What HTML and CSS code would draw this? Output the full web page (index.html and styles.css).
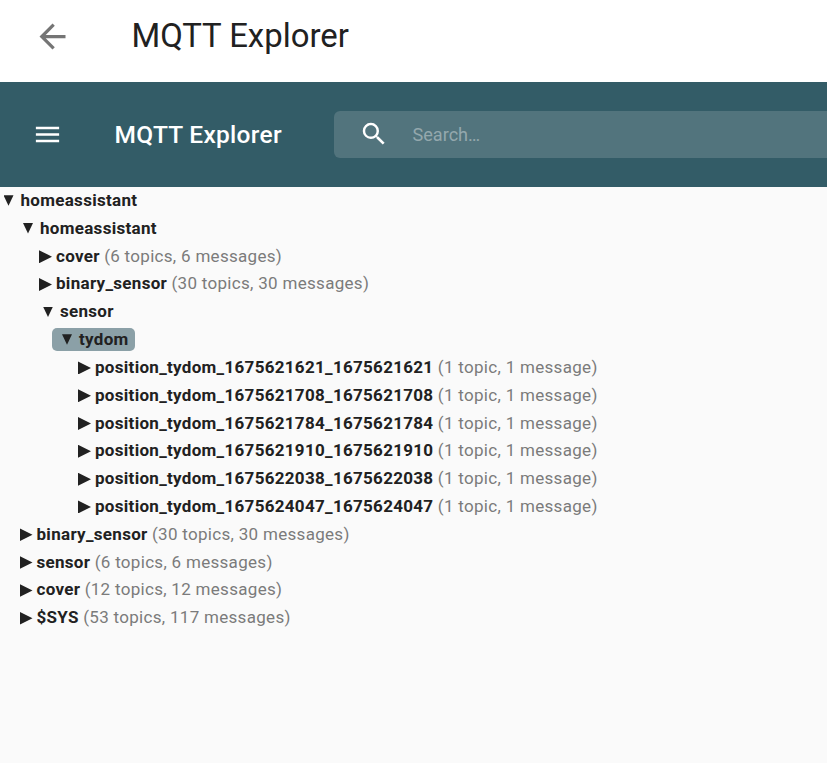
FILE: index.html
```html
<!DOCTYPE html>
<html lang="en">
<head>
<meta charset="utf-8">
<title>MQTT Explorer</title>
<link rel="stylesheet" href="styles.css">
</head>
<body>
<header class="page-header">
  <svg class="back" viewBox="0 0 24 24"><path d="M20 11H7.83l5.59-5.59L12 4l-8 8 8 8 1.41-1.41L7.83 13H20v-2z"/></svg>
  <h1>MQTT Explorer</h1>
</header>
<nav class="app-bar">
  <svg class="menu" viewBox="0 0 24 24"><path d="M3 18h18v-2H3v2zm0-5h18v-2H3v2zm0-7v2h18V6H3z"/></svg>
  <h2>MQTT Explorer</h2>
  <div class="search">
    <svg viewBox="0 0 24 24"><path d="M15.5 14h-.79l-.28-.27A6.47 6.47 0 0 0 16 9.5 6.5 6.5 0 1 0 9.5 16c1.61 0 3.09-.59 4.23-1.57l.27.28v.79l5 4.99L20.49 19l-4.99-5zm-6 0C7.01 14 5 11.99 5 9.5S7.01 5 9.5 5 14 7.01 14 9.5 11.99 14 9.5 14z"/></svg>
    <span>Search…</span>
  </div>
</nav>
<main class="tree">
  <div class="row open l0"><i></i><b>homeassistant</b></div>
  <div class="row open l1"><i></i><b>homeassistant</b></div>
  <div class="row l2"><i></i><b>cover</b><span>(6 topics, 6 messages)</span></div>
  <div class="row l2"><i></i><b>binary_sensor</b><span>(30 topics, 30 messages)</span></div>
  <div class="row open l2"><i></i><b>sensor</b></div>
  <div class="row open l3"><div class="selected"><i></i><b>tydom</b></div></div>
  <div class="row l4"><i></i><b>position_tydom_1675621621_1675621621</b><span>(1 topic, 1 message)</span></div>
  <div class="row l4"><i></i><b>position_tydom_1675621708_1675621708</b><span>(1 topic, 1 message)</span></div>
  <div class="row l4"><i></i><b>position_tydom_1675621784_1675621784</b><span>(1 topic, 1 message)</span></div>
  <div class="row l4"><i></i><b>position_tydom_1675621910_1675621910</b><span>(1 topic, 1 message)</span></div>
  <div class="row l4"><i></i><b>position_tydom_1675622038_1675622038</b><span>(1 topic, 1 message)</span></div>
  <div class="row l4"><i></i><b>position_tydom_1675624047_1675624047</b><span>(1 topic, 1 message)</span></div>
  <div class="row l1"><i></i><b>binary_sensor</b><span>(30 topics, 30 messages)</span></div>
  <div class="row l1"><i></i><b>sensor</b><span>(6 topics, 6 messages)</span></div>
  <div class="row l1"><i></i><b>cover</b><span>(12 topics, 12 messages)</span></div>
  <div class="row l1"><i></i><b>$SYS</b><span>(53 topics, 117 messages)</span></div>
</main>
</body>
</html>
```
FILE: styles.css
```css
* { box-sizing: border-box; }
body { margin: 0; height: 763px; overflow: hidden; background: #fafafa; color: #212121; font-family: Roboto, sans-serif; }
h1, h2 { margin: 0; white-space: nowrap; }
svg { display: block; flex: none; }
.page-header { display: flex; height: 82px; padding: 0 0 10px 33px; align-items: center; background: #fff; }
.back { width: 39px; height: 39px; fill: #757575; }
.page-header h1 { margin: 0 0 2px 59.5px; font-size: 32.9px; font-weight: 400; }
.app-bar { display: flex; height: 104.6px; padding-left: 32px; align-items: center; background: #335c67; color: #fff; }
.menu { width: 31px; height: 31px; fill: #fff; }
.app-bar h2 { padding-left: 51.5px; font-size: 24.5px; font-weight: 500; letter-spacing: 0.28px; flex: 0 0 270.5px; }
.search { display: flex; flex: 1; height: 47px; padding-left: 25px; align-items: center; border-radius: 6px 0 0 6px; background: #52747d; }
.search svg { width: 30px; height: 30px; fill: #fff; }
.search span { margin-left: 24px; color: #94a8ad; font-size: 18.1px; }
.row { display: flex; height: 27.82px; align-items: center; font-size: 17px; line-height: 24px; letter-spacing: 0.3px; white-space: nowrap; }
.row b { font-weight: 700; margin: 0 0 1px 4px; }
.row span { margin: 0 0 1px 4.4px; color: #7b7b7b; }
.row i { width: 13px; height: 13px; margin-top: 1px; background: #212121; clip-path: polygon(0 0, 100% 50%, 0 100%); }
.open i { width: 10px; height: 10.5px; margin-top: 0; clip-path: polygon(0 0, 100% 0, 50% 100%); }
.open b { margin-left: 7px; }
.l0 { padding-left: 3.5px; }
.l1 { padding-left: 19.5px; }
.l1.open { padding-left: 23px; }
.l2 { padding-left: 39px; }
.l2.open { padding-left: 43px; }
.l3 { padding-left: 52px; }
.l4 { padding-left: 78px; }
.selected { display: flex; align-items: center; height: 23px; padding: 0 6.5px 0 10px; border-radius: 5px; background: #8ba0a7; }
```
